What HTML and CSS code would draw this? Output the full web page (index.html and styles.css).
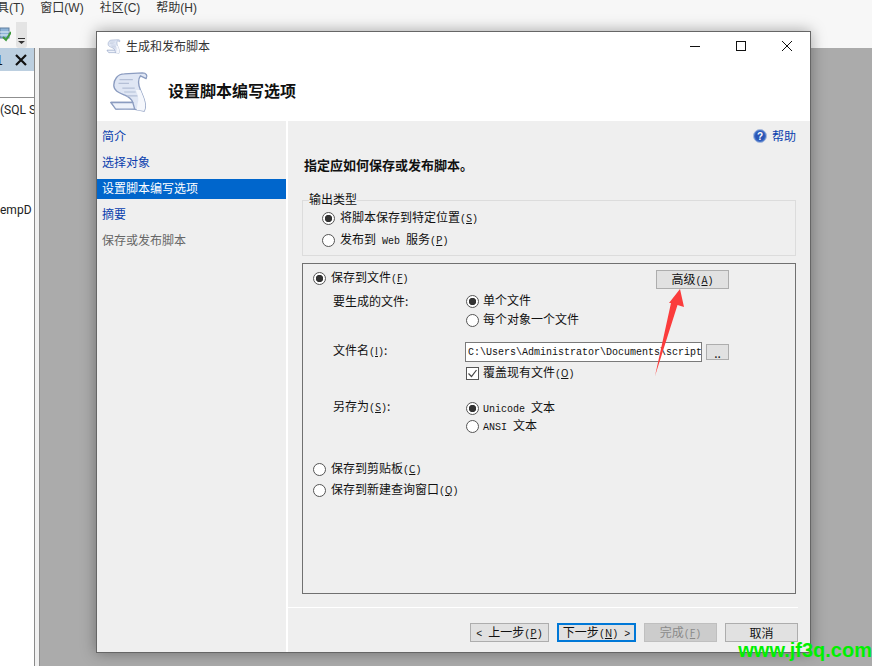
FILE: index.html
```html
<!DOCTYPE html>
<html lang="zh-CN">
  <head>
    <meta charset="UTF-8" />
    <title>生成和发布脚本</title>
    <link rel="stylesheet" href="styles.css">
  </head>
  <body>
    <svg class="defs" width="0" height="0">
      <symbol id="scroll" viewBox="8 10 42 44">
        <path d="M16 50 C20 49 30 49 34 50 L45 52 C48 45 44 37 41 30 C39 25 38 19 41 15 L47 18 C49 15 47 12 43 12 L24 13 C17 13 13 19 13 25 C13 31 19 33 24 35 C29 37 32 40 33 43 L10 43 Z" fill="#dfe6f4" stroke="#8b9cc0" stroke-width="1.4" stroke-linejoin="round"/>
        <path d="M10 43 L33 43 L35 50 L15 50 Z" fill="#eef2fa" stroke="#8b9cc0" stroke-width="1.4" stroke-linejoin="round"/>
        <path d="M19 19 H33 M18 23 H29 M22 28 H35 M24 32 H36 M27 36 H38" stroke="#b4bfd6" stroke-width="1.2" fill="none"/>
        <path d="M38 44 C40 40 38 34 36 30 L41 30 C44 37 48 45 45 52 L37 51 Z" fill="#f5f7fc"/>
      </symbol>
    </svg>

    <header class="menubar">
      <span class="menu-item menu-first">具(T)</span>
      <span class="menu-item">窗口(W)</span>
      <span class="menu-item">社区(C)</span>
      <span class="menu-item">帮助(H)</span>
    </header>
    <div class="toolbar">
      <svg class="tool-icon" width="11" height="15" viewBox="0 0 11 15">
        <rect x="0" y="1" width="9" height="10" fill="#8fb4d8" stroke="#5f7f9f"/>
        <path d="M0 5 H9 M0 8 H9" stroke="#e8f0f8"/>
        <path d="M3 10 L6 13 L11 5" fill="none" stroke="#3f9a3f" stroke-width="2"/>
      </svg>
      <span class="tool-more">
        <svg width="7" height="6" viewBox="0 0 7 6"><path d="M0 0 H7 V1 H0 Z M0 3 H7 L3.5 6 Z" fill="#333"/></svg>
      </span>
    </div>

    <div class="workspace">
      <aside class="explorer">
        <div class="explorer-tab">
          <span class="tab-num">1</span>
          <svg width="12" height="12" viewBox="0 0 12 12"><path d="M1 1 L11 11 M11 1 L1 11" stroke="#111" stroke-width="2.2"/></svg>
        </div>
        <div class="explorer-search"></div>
        <div class="explorer-tree">
          <div class="tree-line tree-sql">(SQL S</div>
          <div class="tree-line tree-temp">empD</div>
        </div>
      </aside>
      <div class="strip"></div>
      <div class="desktop"></div>
    </div>

    <section class="dialog">
      <div class="titlebar">
        <svg class="title-icon"><use href="#scroll"/></svg>
        <span class="title-text">生成和发布脚本</span>
        <div class="win-btns">
          <svg width="12" height="12" viewBox="0 0 12 12"><path d="M1 6.5 H11" stroke="#111"/></svg>
          <svg width="12" height="12" viewBox="0 0 12 12"><rect x="1.5" y="1.5" width="9" height="9" fill="none" stroke="#111"/></svg>
          <svg width="12" height="12" viewBox="0 0 12 12"><path d="M1 1 L11 11 M11 1 L1 11" stroke="#111"/></svg>
        </div>
      </div>
      <div class="banner">
        <svg class="banner-icon"><use href="#scroll"/></svg>
        <h1>设置脚本编写选项</h1>
      </div>

      <div class="dialog-body">
        <nav class="steps">
          <a href="#" class="step">简介</a>
          <a href="#" class="step">选择对象</a>
          <a href="#" class="step active">设置脚本编写选项</a>
          <a href="#" class="step">摘要</a>
          <a href="#" class="step disabled">保存或发布脚本</a>
        </nav>

        <main class="content">
          <div class="help-row">
            <svg width="14" height="14" viewBox="0 0 14 14">
              <circle cx="7" cy="7" r="6.5" fill="#3f6fc8" stroke="#a9bbdc"/>
              <circle cx="7" cy="7" r="4.8" fill="#2a55b4"/>
              <text x="7" y="10.5" text-anchor="middle" class="help-mark">?</text>
            </svg>
            <a href="#" class="help-link">帮助</a>
          </div>

          <h2>指定应如何保存或发布脚本。</h2>

          <fieldset class="output-type">
            <legend>输出类型</legend>
            <label class="opt"><input type="radio" name="output" checked>将脚本保存到特定位置<span class="en">(<u>S</u>)</span></label>
            <label class="opt"><input type="radio" name="output">发布到<span class="en"> Web </span>服务<span class="en">(<u>P</u>)</span></label>
          </fieldset>

          <div class="save-box">
            <div class="save-top">
              <label class="opt"><input type="radio" name="target" checked>保存到文件<span class="en">(<u>F</u>)</span></label>
              <button class="btn btn-adv">高级<span class="en">(<u>A</u>)</span></button>
            </div>

            <div class="file-grid">
              <div class="field-label">要生成的文件:</div>
              <div class="field-value">
                <label class="opt"><input type="radio" name="files" checked>单个文件</label>
                <label class="opt"><input type="radio" name="files">每个对象一个文件</label>
              </div>

              <div class="field-label label-name">文件名<span class="en">(<u>I</u>)</span>:</div>
              <div class="field-value value-name">
                <div class="path-row">
                  <input class="path" type="text" value="C:\Users\Administrator\Documents\script">
                  <button class="btn btn-browse">..</button>
                </div>
                <label class="opt opt-check"><span class="check"><svg width="11" height="11" viewBox="0 0 11 11"><path d="M1.5 5.5 L4.5 8.5 L9.5 2" fill="none" stroke="#444" stroke-width="1.2"/></svg></span>覆盖现有文件<span class="en">(<u>O</u>)</span></label>
              </div>

              <div class="field-label label-save">另存为<span class="en">(<u>S</u>)</span>:</div>
              <div class="field-value value-save">
                <label class="opt"><input type="radio" name="enc" checked><span class="en">Unicode </span>文本</label>
                <label class="opt"><input type="radio" name="enc"><span class="en">ANSI </span>文本</label>
              </div>
            </div>

            <div class="other-targets">
              <label class="opt"><input type="radio" name="target">保存到剪贴板<span class="en">(<u>C</u>)</span></label>
              <label class="opt"><input type="radio" name="target">保存到新建查询窗口<span class="en">(<u>Q</u>)</span></label>
            </div>
          </div>

          <footer class="actions">
            <button class="btn btn-nav"><span class="en">&lt; </span>上一步<span class="en">(<u>P</u>)</span></button>
            <button class="btn btn-nav btn-default">下一步<span class="en">(<u>N</u>) &gt;</span></button>
            <button class="btn btn-act btn-off">完成<span class="en">(<u>F</u>)</span></button>
            <button class="btn btn-act">取消</button>
          </footer>
        </main>
      </div>
    </section>

    <svg class="arrow" width="40" height="96" viewBox="650 285 40 96">
      <path d="M680 289 L684 307 L677.5 305 L655 376 L671 303 L669 303 Z" fill="#fb3c3c"/>
    </svg>
    <div class="watermark">www.jf3q.com</div>
  </body>
</html>
```

FILE: styles.css
```css
* {
  margin: 0;
  padding: 0;
  box-sizing: border-box;
  font-family: "Noto Sans CJK SC", "Liberation Sans", sans-serif;
}

html, body {
  width: 872px;
  height: 666px;
  overflow: hidden;
}

body {
  position: relative;
  display: flex;
  flex-direction: column;
  background-color: #ababab;
  color: #111;
  font-size: 12px;
  line-height: 20px;
}

.defs {
  position: absolute;
}

.en {
  font-family: "Liberation Mono", monospace;
  font-size: 10px;
  white-space: pre;
}

/* app behind the dialog */
.menubar {
  height: 21px;
  display: flex;
  gap: 16px;
  align-items: center;
  padding-bottom: 6px;
  overflow: hidden;
  background-color: #f7f7f7;
  color: #333;
}

.menu-item {
  white-space: nowrap;
  font-family: "Liberation Sans", "Noto Sans CJK SC", sans-serif;
}

.menu-first {
  margin-left: -3px;
}

.toolbar {
  height: 27px;
  display: flex;
  align-items: center;
  background-color: #f7f7f7;
}

.tool-more {
  width: 11px;
  height: 26px;
  margin-left: 5px;
  display: flex;
  align-items: flex-end;
  justify-content: center;
  padding-bottom: 4px;
  background-color: #e4e4e4;
  border-radius: 0 0 3px 3px;
}

.workspace {
  flex: 1;
  display: flex;
}

.explorer {
  width: 35px;
  background-color: white;
  border-right: 1px solid #8a8a8a;
  overflow: hidden;
}

.explorer-tab {
  height: 23px;
  display: flex;
  justify-content: flex-end;
  align-items: center;
  gap: 6px;
  padding-right: 7px;
  background-color: #bccfe0;
}

.tab-num {
  margin-right: 6px;
  margin-left: -6px;
  font-size: 13px;
}

.explorer-search {
  height: 27px;
  border-bottom: 1px solid #8f8f8f;
}

.tree-line {
  white-space: nowrap;
  font-family: Roboto, sans-serif;
  font-size: 12px;
  color: #222;
}

.tree-sql {
  padding-top: 2px;
}

.tree-temp {
  margin-top: 80px;
}

.strip {
  width: 5px;
  background-color: #f0f0f0;
  border-right: 1px solid #8f8f8f;
}

.desktop {
  flex: 1;
}

/* dialog window */
.dialog {
  position: absolute;
  left: 96px;
  top: 31px;
  width: 715px;
  height: 622px;
  display: flex;
  flex-direction: column;
  background-color: white;
  border: 1px solid #666;
  box-shadow: 0 0 14px rgba(0, 0, 0, 0.35);
}

.titlebar {
  height: 30px;
  display: flex;
  align-items: center;
  padding-left: 9px;
  padding-bottom: 2px;
  color: #333;
}

.title-icon {
  width: 15px;
  height: 15px;
  margin-right: 5px;
}

.title-text {
  flex: 1;
}

.win-btns {
  display: flex;
  gap: 34px;
  padding-right: 17px;
}

.banner {
  height: 59px;
  display: flex;
  align-items: center;
  padding-left: 12px;
}

.banner-icon {
  width: 40px;
  height: 42px;
  margin-right: 19px;
}

.banner h1 {
  font-size: 16px;
  font-weight: 700;
  color: #111;
  margin-bottom: 3px;
}

.dialog-body {
  flex: 1;
  display: flex;
  gap: 2px;
}

.steps {
  width: 189px;
  display: flex;
  flex-direction: column;
  gap: 6px;
  padding-top: 6px;
  background-color: #efefef;
}

.step {
  height: 20px;
  padding-left: 5px;
  line-height: 18px;
  color: #0b3fae;
  text-decoration: none;
}

.step.active {
  background-color: #0066cc;
  color: white;
}

.step.disabled {
  color: #666;
}

.content {
  flex: 1;
  display: flex;
  flex-direction: column;
  padding: 5px 14px 0;
  background-color: #efefef;
}

.help-row {
  height: 20px;
  display: flex;
  justify-content: flex-end;
  align-items: center;
  gap: 5px;
}

.help-mark {
  font-family: "Liberation Sans", sans-serif;
  font-size: 10px;
  font-weight: 700;
  fill: white;
}

.help-link {
  color: #0b3fae;
  text-decoration: none;
}

.content h2 {
  margin-top: 9px;
  margin-left: 2px;
  font-size: 13px;
  font-weight: 700;
  color: #111;
}

.output-type {
  margin-top: 17px;
  height: 64px;
  padding: 7px 0 0 19px;
  border: 1px solid #dcdcdc;
}

.output-type legend {
  margin-left: -13px;
  margin-bottom: -8px;
  padding-bottom: 2px;
  line-height: 14px;
}

.opt {
  display: block;
  height: 19px;
  line-height: 17px;
  white-space: pre;
}

.opt input[type="radio"] {
  appearance: none;
  display: inline-block;
  vertical-align: middle;
  width: 13px;
  height: 13px;
  margin-right: 5px;
  margin-top: -1px;
  border: 1px solid #555;
  border-radius: 50%;
  background-color: white;
}

.opt input[type="radio"]:checked {
  background-image: radial-gradient(circle, #333 0, #333 3.4px, white 4px);
}

.output-type .opt {
  height: 22px;
  line-height: 20px;
}

.save-box {
  margin-top: 7px;
  height: 331px;
  display: flex;
  flex-direction: column;
  padding: 4px 10px 0;
  border: 1px solid #707070;
}

.save-top {
  display: flex;
  justify-content: space-between;
  align-items: flex-start;
  padding-right: 56px;
  height: 20px;
}

.btn {
  height: 19px;
  line-height: 16px;
  background-color: #e1e1e1;
  border: 1px solid #adadad;
  color: #111;
  font-size: 12px;
}

.btn-adv {
  width: 73px;
  margin-top: 2px;
}

.file-grid {
  display: grid;
  grid-template-columns: 132px 1fr;
  margin-top: 3px;
  padding-left: 20px;
}

.field-label {
  height: 20px;
}

.field-value .opt {
  margin-left: 1px;
}

.field-value .opt input[type="radio"],
.field-value .check {
  margin-right: 4px;
}

.label-name {
  margin-top: 11px;
}

.value-name {
  margin-top: 13px;
}

.path-row {
  display: flex;
  align-items: center;
  gap: 4px;
}

.path {
  width: 237px;
  height: 20px;
  padding-left: 2px;
  border: 1px solid #7a7a7a;
  background-color: white;
  font-family: "Liberation Mono", monospace;
  font-size: 10px;
  color: #111;
}

.btn-browse {
  width: 23px;
  height: 16px;
}

.opt-check {
  margin-top: 1px;
}

.check {
  display: inline-flex;
  vertical-align: middle;
  width: 13px;
  height: 13px;
  margin-top: -1px;
  align-items: center;
  justify-content: center;
  border: 1px solid #555;
  background-color: white;
}

.label-save {
  margin-top: 12px;
  padding-top: 2px;
}

.value-save {
  margin-top: 17px;
}

.value-save .opt {
  height: 18px;
  line-height: 16px;
}

.other-targets {
  margin-top: 24px;
  display: flex;
  flex-direction: column;
  gap: 2px;
}

.actions {
  margin-top: 13px;
  margin-right: -2px;
  margin-left: -14px;
  display: flex;
  justify-content: flex-end;
  gap: 8px;
  padding-top: 15px;
  border-top: 1px solid white;
}

.btn-nav {
  width: 79px;
}

.btn-act {
  width: 73px;
}

.btn-default {
  border: 2px solid #0078d7;
  line-height: 14px;
}

.btn-off {
  background-color: #cccccc;
  border-color: #bfbfbf;
  color: #8a8a8a;
}

/* annotations on top of the screenshot */
.arrow {
  position: absolute;
  left: 650px;
  top: 285px;
}

.watermark {
  position: absolute;
  right: 0;
  top: 637px;
  font-family: "Liberation Sans", sans-serif;
  font-size: 20px;
  font-weight: 700;
  line-height: 26px;
  color: #00f000;
  white-space: nowrap;
}
```
